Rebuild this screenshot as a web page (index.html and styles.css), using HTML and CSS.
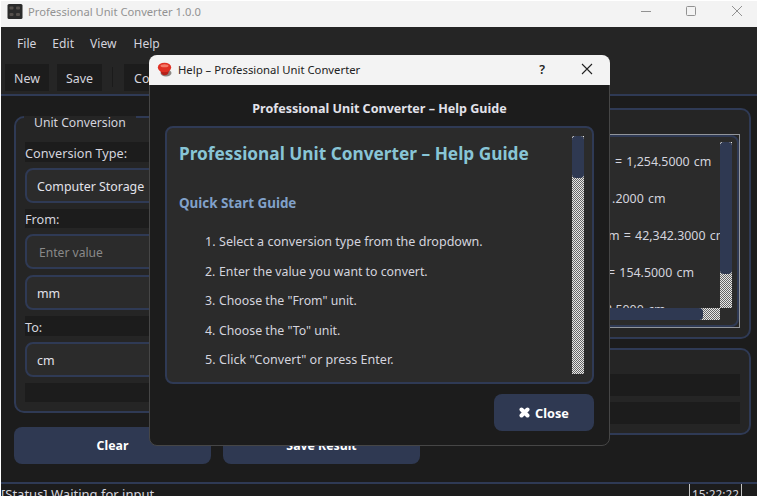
FILE: index.html
```
<!DOCTYPE html>
<html lang="en">
<head>
<meta charset="utf-8">
<title>Professional Unit Converter 1.0.0</title>
<link rel="stylesheet" href="styles.css">
</head>
<body>
<div class="window">
  <header class="titlebar">
    <svg class="app-icon" width="16" height="16" viewBox="0 0 16 16"><rect x=".5" y="0" width="15" height="15" rx="1.500" fill="#2b2b2b"/><g fill="#55504c"><rect x="2.500" y="2.500" width="4" height="3" rx="1"/><rect x="9" y="2.500" width="4" height="3" rx="1"/><rect x="2.500" y="9" width="4" height="3" rx="1"/><rect x="9" y="9" width="4" height="3" rx="1"/></g></svg>
    <span class="app-title">Professional Unit Converter 1.0.0</span>
    <svg class="controls" width="112" height="16" viewBox="0 0 112 16" fill="none" stroke="#929292"><path d="M1 7.500h10"/><rect x="46.500" y="2.500" width="9" height="9" rx="1"/><path d="M92 2l10 10M102 2l-10 10"/></svg>
  </header>
  <nav class="menubar"><span>File</span><span>Edit</span><span>View</span><span>Help</span></nav>
  <div class="toolbar"><span class="tool new">New</span><span class="tool save">Save</span><i class="tool-sep"></i><span class="tool convert">Convert</span></div>
  <main class="content">
    <section class="left">
      <div class="group conversion">
        <div class="legend">Unit Conversion</div>
        <label class="strip">Conversion Type:</label>
        <div class="field">Computer Storage</div>
        <label class="strip from">From:</label>
        <div class="field placeholder">Enter value</div>
        <div class="field unit">mm</div>
        <label class="strip to">To:</label>
        <div class="field">cm</div>
        <div class="strip result"></div>
      </div>
      <div class="actions"><button>Clear</button><button>Save Result</button></div>
    </section>
    <section class="right">
      <div class="group history">
        <div class="list-focus"><div class="list">
          <div class="rows"><p class="r1">= 1,254.5000 cm</p><p class="r2">1.2000 cm</p><p class="r3">m = 42,342.3000 cm</p><p class="r4">= 154.5000 cm</p><p class="r5">8.5000 cm</p></div>
          <div class="vbar"><i></i></div>
          <div class="hbar"><i></i></div>
        </div></div>
      </div>
      <div class="group stats"><div class="bar"></div><div class="bar"></div></div>
    </section>
  </main>
  <footer class="status"><span>[Status] Waiting for input</span><time>15:22:22</time></footer>
</div>
<div class="dialog">
  <header class="dialog-title">
    <svg width="16" height="16" viewBox="0 0 16 16"><ellipse cx="9" cy="11" rx="5.500" ry="3.500" fill="#8b8783"/><path d="M2.500 6l2 6q3 2.500 6.500 0l2-6z" fill="#b5211a"/><ellipse cx="7.500" cy="5.500" rx="6.700" ry="4.800" fill="#df3024"/><ellipse cx="7.500" cy="3.800" rx="4" ry="1.500" fill="#f47a68"/></svg>
    <span>Help – Professional Unit Converter</span>
    <b>?</b>
    <svg class="x" width="12" height="12" viewBox="0 0 12 12" fill="none" stroke="#222" stroke-width="1.100"><path d="M1 1l10 10M11 1L1 11"/></svg>
  </header>
  <h3>Professional Unit Converter – Help Guide</h3>
  <div class="guide">
    <article>
      <h1>Professional Unit Converter – Help Guide</h1>
      <h2>Quick Start Guide</h2>
      <ol>
        <li><i>1.</i>Select a conversion type from the dropdown.</li>
        <li class="tight"><i>2.</i>Enter the value you want to convert.</li>
        <li class="tight"><i>3.</i>Choose the "From" unit.</li>
        <li class="tight"><i>4.</i>Choose the "To" unit.</li>
        <li><i>5.</i>Click "Convert" or press Enter.</li>
      </ol>
    </article>
    <div class="vbar"><i></i></div>
  </div>
  <div class="dialog-actions"><button><svg width="11" height="11" viewBox="0 0 11 11"><path d="M2.500 2.500l6 6M8.500 2.500l-6 6" stroke="#fff" stroke-width="4" stroke-linecap="round"/></svg>Close</button></div>
</div>
</body>
</html>
```
FILE: styles.css
```
* { box-sizing: border-box; }
body {
  margin: 0; width: 758px; height: 497px; overflow: hidden; background: #fff;
  font: 12.4px/20px "Noto Sans", "Open Sans", sans-serif; color: #d4d4de;
}
i { font-style: normal; }
svg { display: block; flex: none; }
button {
  border: 0; border-radius: 8px; height: 37px; padding: 0; background: #2f3952; color: #fff;
  font: 700 12.3px/20px "Noto Sans", sans-serif;
}
.window { margin: 1px; width: 756px; height: 495px; overflow: hidden; background: #1c1c1c; display: flex; flex-direction: column; }
.titlebar { height: 26px; flex: none; background: #f3f3f3; color: #929292; display: flex; align-items: flex-start; padding: 3px 5px 0 6px; }
.app-title { font-size: 11.2px; line-height: 16px; margin-left: 5px; }
.controls { margin-left: auto; }
.menubar { height: 33px; flex: none; background: #252525; display: flex; gap: 16px; padding: 7px 0 0 16px; font-size: 12.1px; }
.menubar span:last-child { margin-left: 1px; }
.toolbar { height: 36px; flex: none; background: #252525; border-bottom: 2px solid #2f3a55; display: flex; align-items: flex-start; padding: 4px 0 0 4px; }
.tool { height: 27px; line-height: 30px; background: #1c1c1c; text-align: center; }
.new { width: 44px; }
.save { width: 45px; margin-left: 8px; }
.tool-sep { width: 1px; height: 20px; margin: 3px 11px 0 10px; background: #1b1b1b; }
.convert { width: 66px; }
.content { height: 386px; flex: none; display: flex; gap: 14px; padding-left: 13px; }
.left { width: 406px; padding-top: 20px; }
.right { width: 317px; padding-top: 12px; }
.group { border: 2px solid #2f3a55; border-radius: 10px; background: #252525; }
.conversion { height: 297px; padding: 0 9px; }
.legend { width: 112px; height: 18px; margin: -2px 0 8px -1px; padding-left: 10px; background: #252525; line-height: 13px; font-size: 12.2px; }
.strip { display: block; height: 20px; margin-bottom: 6px; background: #1c1c1c; line-height: 23px; font-size: 12.7px; }
.field { height: 35px; border: 2px solid #2f3a55; border-radius: 8px; background: #2b2b2b; padding: 0 10px; line-height: 34px; color: #e2e2ea; }
.from { margin-top: 6px; height: 19px; line-height: 21px; }
.placeholder { color: #898989; padding-left: 12px; font-size: 12.1px; }
.unit, .to { margin-top: 6px; }
.result { margin-top: 6px; height: 19px; }
.actions { display: grid; grid-template-columns: 197px 197px; gap: 12px; margin-top: 14px; }
.history { height: 231px; padding: 24px 9px 0; }
.list-focus { height: 194px; border: 1px solid #92959a; }
.list { height: 192px; border: 2px solid #2f3a55; border-radius: 8px; background: #2b2b2b; display: grid; grid-template: 166px 12px / 1fr 12px; padding: 5px 5px 0 0; }
.rows { overflow: hidden; padding: 10px 0 0 162px; white-space: nowrap; }
.rows p { margin: 0 0 17px; height: 20px; word-spacing: 1px; }
.rows .r1 { padding-left: 5px; }
.rows .r2 { margin-left: -5px; }
.rows .r3 { margin-left: -2px; }
.rows .r4 { margin-left: -2px; }
.rows .r5 { margin-left: -5px; }
.vbar, .hbar { background: repeating-conic-gradient(#e8e8e8 0 25%, #666 0 50%) 0 0 / 2px 2px; }
.vbar i { display: block; height: 132px; background: #2f3952; border-radius: 4px; }
.hbar i { display: block; height: 12px; margin-right: 17px; background: #2f3952; border-radius: 4px; }
.stats { height: 87px; margin-top: 9px; padding: 24px 9px 0; }
.bar { height: 22px; margin-bottom: 6px; background: #1c1c1c; }
.status { height: 14px; flex: none; border-top: 2px solid #2f3a55; display: flex; justify-content: space-between; font-size: 13px; line-height: 20px; white-space: nowrap; }
.status time { width: 53px; height: 20px; margin-right: 15px; border: solid #c4c4c4; border-width: 0 1px; text-align: center; font-size: 11.8px; }

.dialog { position: absolute; left: 149px; top: 55px; width: 461px; height: 391px; border: 1px solid #464646; border-radius: 8px; background: #1c1c1c; }
.dialog-title { height: 30px; margin: -1px -1px 0; border-radius: 8px 8px 0 0; background: #f3f3f3; color: #222; display: flex; align-items: center; padding: 0 17px 0 8px; font-size: 11.3px; }
.dialog-title span { margin-left: 5px; }
.dialog-title b { margin-left: auto; font-size: 12.5px; font-weight: 600; }
.dialog-title .x { margin-left: 36px; margin-top: -2px; }
.dialog h3 { margin: 13px 0 8px; font-size: 12.55px; line-height: 22px; height: 20px; text-align: center; color: #e2e2ea; }
.guide { height: 258px; margin: 0 15px; border: 2px solid #2f3a55; border-radius: 8px; background: #2b2b2b; display: flex; padding: 8px 8px 8px 12px; }
.guide article { flex: 1; }
.guide .vbar { width: 12px; }
.guide .vbar i { height: 42px; }
.guide h1 { margin: 5px 0 0; font-size: 17.25px; line-height: 26px; color: #88c5d6; white-space: nowrap; }
.guide h2 { margin: 26px 0 0; font-size: 13.4px; line-height: 20px; color: #81a1c9; }
.guide ol { list-style: none; margin: 19px 0 0; padding: 0 0 0 26px; font-size: 12.55px; }
.guide li { height: 20px; margin-bottom: 9.5px; display: flex; white-space: nowrap; }
.guide li i { width: 14px; flex: none; }
.guide .tight { font-size: 12.3px; }
.dialog-actions { display: flex; justify-content: flex-end; padding: 10px 15px 0; }
.dialog-actions button { width: 100px; display: flex; align-items: center; justify-content: center; gap: 5px; font-size: 12.7px; }
```
